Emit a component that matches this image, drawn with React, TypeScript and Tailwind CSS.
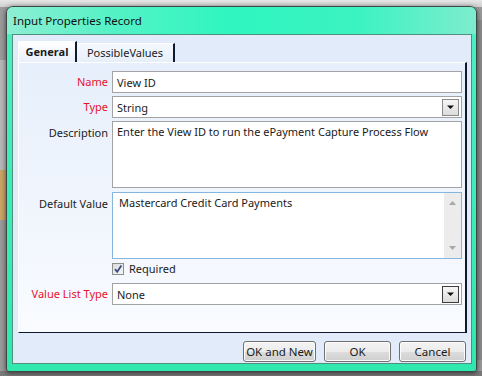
import React from "react";

function DropArrow() {
  return (
    <svg width="9" height="6" viewBox="0 0 9 6">
      <path d="M1 1.5h7L4.5 5z" fill="#111" />
    </svg>
  );
}

function Combo({ value, focused }: { value: string; focused?: boolean }) {
  return (
    <div className="flex h-[22px] items-center border border-[#a3a3a3] bg-white pl-[4px] pr-[2px]">
      <span className="flex-1 leading-none">{value}</span>
      <span
        className={`flex h-[17px] w-[17px] items-center justify-center border bg-[linear-gradient(#f6f6f6,#dcdcdc)] ${
          focused ? "border-[#3c3c3c]" : "border-[#8a8a8a]"
        }`}
      >
        <DropArrow />
      </span>
    </div>
  );
}

function Label({ text, red, top }: { text: string; red?: boolean; top?: boolean }) {
  return (
    <div
      className={`w-[90px] shrink-0 pr-[1px] text-right ${red ? "text-[#e8112d]" : "text-[#1b1b1b]"} ${
        top ? "pt-[4px]" : "self-center"
      }`}
    >
      {text}
    </div>
  );
}

function Button({ label, w }: { label: string; w: string }) {
  return (
    <button
      className={`${w} h-[21px] rounded-[3px] border border-[#707070] bg-[linear-gradient(#f4f4f4_0%,#ebebeb_50%,#dddddd_51%,#cfcfcf_100%)] text-[11.5px] leading-none text-[#1b1b1b] shadow-[inset_0_0_0_1px_#fcfcfc]`}
    >
      {label}
    </button>
  );
}

export default function App() {
  return (
    <div className="relative h-[376px] w-[482px] overflow-hidden bg-[#9a9a9a] font-['Noto_Sans',sans-serif] text-[11px] text-[#1b1b1b]">
      {/* desktop behind the dialog */}
      <div className="absolute left-0 top-0 h-[7px] w-full bg-[linear-gradient(#e6e6e6,#cfcfcf)]" />
      <div className="absolute left-0 top-[60px] h-[130px] w-[6px] bg-[#b7b7b7]" />
      <div className="absolute left-0 top-[170px] h-[50px] w-[6px] bg-[#c9a466]" />
      <div className="absolute right-0 top-[20px] h-[340px] w-[5px] bg-[#8a8a8a]" />
      <div className="absolute bottom-0 left-0 h-[5px] w-full bg-[#7a7a7a]" />

      <div className="relative ml-[6px] mt-[6px] flex h-[366px] w-[471px] flex-col rounded-t-[7px] rounded-b-[3px] border border-[#3b4a45] bg-[linear-gradient(#4cf0c2,#30e8ae)] shadow-[0_1px_5px_rgba(0,0,0,0.6)]">
        <div className="flex h-[27px] items-center rounded-t-[6px] bg-[linear-gradient(90deg,#8eeed3_0%,#55f2c6_22%,#2ef5bf_48%,#3cf3c2_75%,#7eecce_100%)] pl-[6px] text-[11.5px] text-[#111]">
          Input Properties Record
        </div>

        <div className="ml-[5px] mr-[4px] flex h-[330px] flex-col border border-[#4f8f7c] bg-[#e1ebf9] pl-[5px] pr-[4px] pt-[6px]">
          {/* tabs */}
          <div className="flex h-[21px] items-end">
            <div className="flex h-[21px] w-[59px] items-center justify-center border-l border-t border-l-white border-t-white border-r-2 border-r-[#0d1a2e] bg-[linear-gradient(#ffffff,#e9f0fa)] font-bold">
              General
            </div>
            <div className="flex h-[19px] w-[98px] items-center justify-center border-r-2 border-r-[#0d1a2e] border-t border-t-white bg-[linear-gradient(#f5f9fe,#e6eef9)]">
              PossibleValues
            </div>
          </div>

          {/* tab page */}
          <div className="flex h-[271px] flex-col border-b border-l border-r-2 border-t border-b-[#0d1a2e] border-l-white border-r-[#0d1a2e] border-t-white bg-[linear-gradient(#e6effb,#f9fbff)] pr-[3px] pt-[8px]">
            <div className="flex gap-[3px]">
              <Label text="Name" red />
              <div className="flex h-[22px] flex-1 items-center border border-[#a3a3a3] bg-white pl-[4px] leading-none">
                View ID
              </div>
            </div>

            <div className="mt-[3px] flex gap-[3px]">
              <Label text="Type" red />
              <div className="flex-1">
                <Combo value="String" />
              </div>
            </div>

            <div className="mt-[3px] flex gap-[3px]">
              <Label text="Description" top />
              <div className="h-[67px] flex-1 border border-[#a3a3a3] bg-white pl-[4px] pt-[2px] leading-[16px]">
                Enter the View ID to run the ePayment Capture Process Flow
              </div>
            </div>

            <div className="mt-[4px] flex gap-[3px]">
              <Label text="Default Value" top />
              <div className="flex h-[67px] flex-1 border border-[#86b5de] bg-white">
                <div className="flex-1 pl-[6px] pt-[2px] leading-[16px]">Mastercard Credit Card Payments</div>
                <div className="flex w-[17px] flex-col items-center justify-between bg-[#ececec] py-[8px]">
                  <svg width="7" height="4" viewBox="0 0 7 4">
                    <path d="M0 4h7L3.5 0z" fill="#a8a8a8" />
                  </svg>
                  <svg width="7" height="4" viewBox="0 0 7 4">
                    <path d="M0 0h7L3.5 4z" fill="#a8a8a8" />
                  </svg>
                </div>
              </div>
            </div>

            <div className="mt-[4px] flex h-[12px] items-center gap-[5px] pl-[93px]">
              <span className="flex h-[12px] w-[12px] items-center justify-center border border-[#8e8f8f] bg-[linear-gradient(135deg,#dcdcdc,#f6f6f6)]">
                <svg width="10" height="10" viewBox="0 0 10 10">
                  <path d="M2 5.2l2.2 2.6L8.4 1.6" fill="none" stroke="#3b4f86" strokeWidth="1.8" />
                </svg>
              </span>
              <span>Required</span>
            </div>

            <div className="mt-[8px] flex gap-[3px]">
              <Label text="Value List Type" red />
              <div className="flex-1">
                <Combo value="None" focused />
              </div>
            </div>
          </div>

          {/* buttons */}
          <div className="mt-[8px] flex justify-end gap-[8px] pr-[1px]">
            <Button label="OK and New" w="w-[73px]" />
            <Button label="OK" w="w-[67px]" />
            <Button label="Cancel" w="w-[67px]" />
          </div>
        </div>
      </div>
    </div>
  );
}
